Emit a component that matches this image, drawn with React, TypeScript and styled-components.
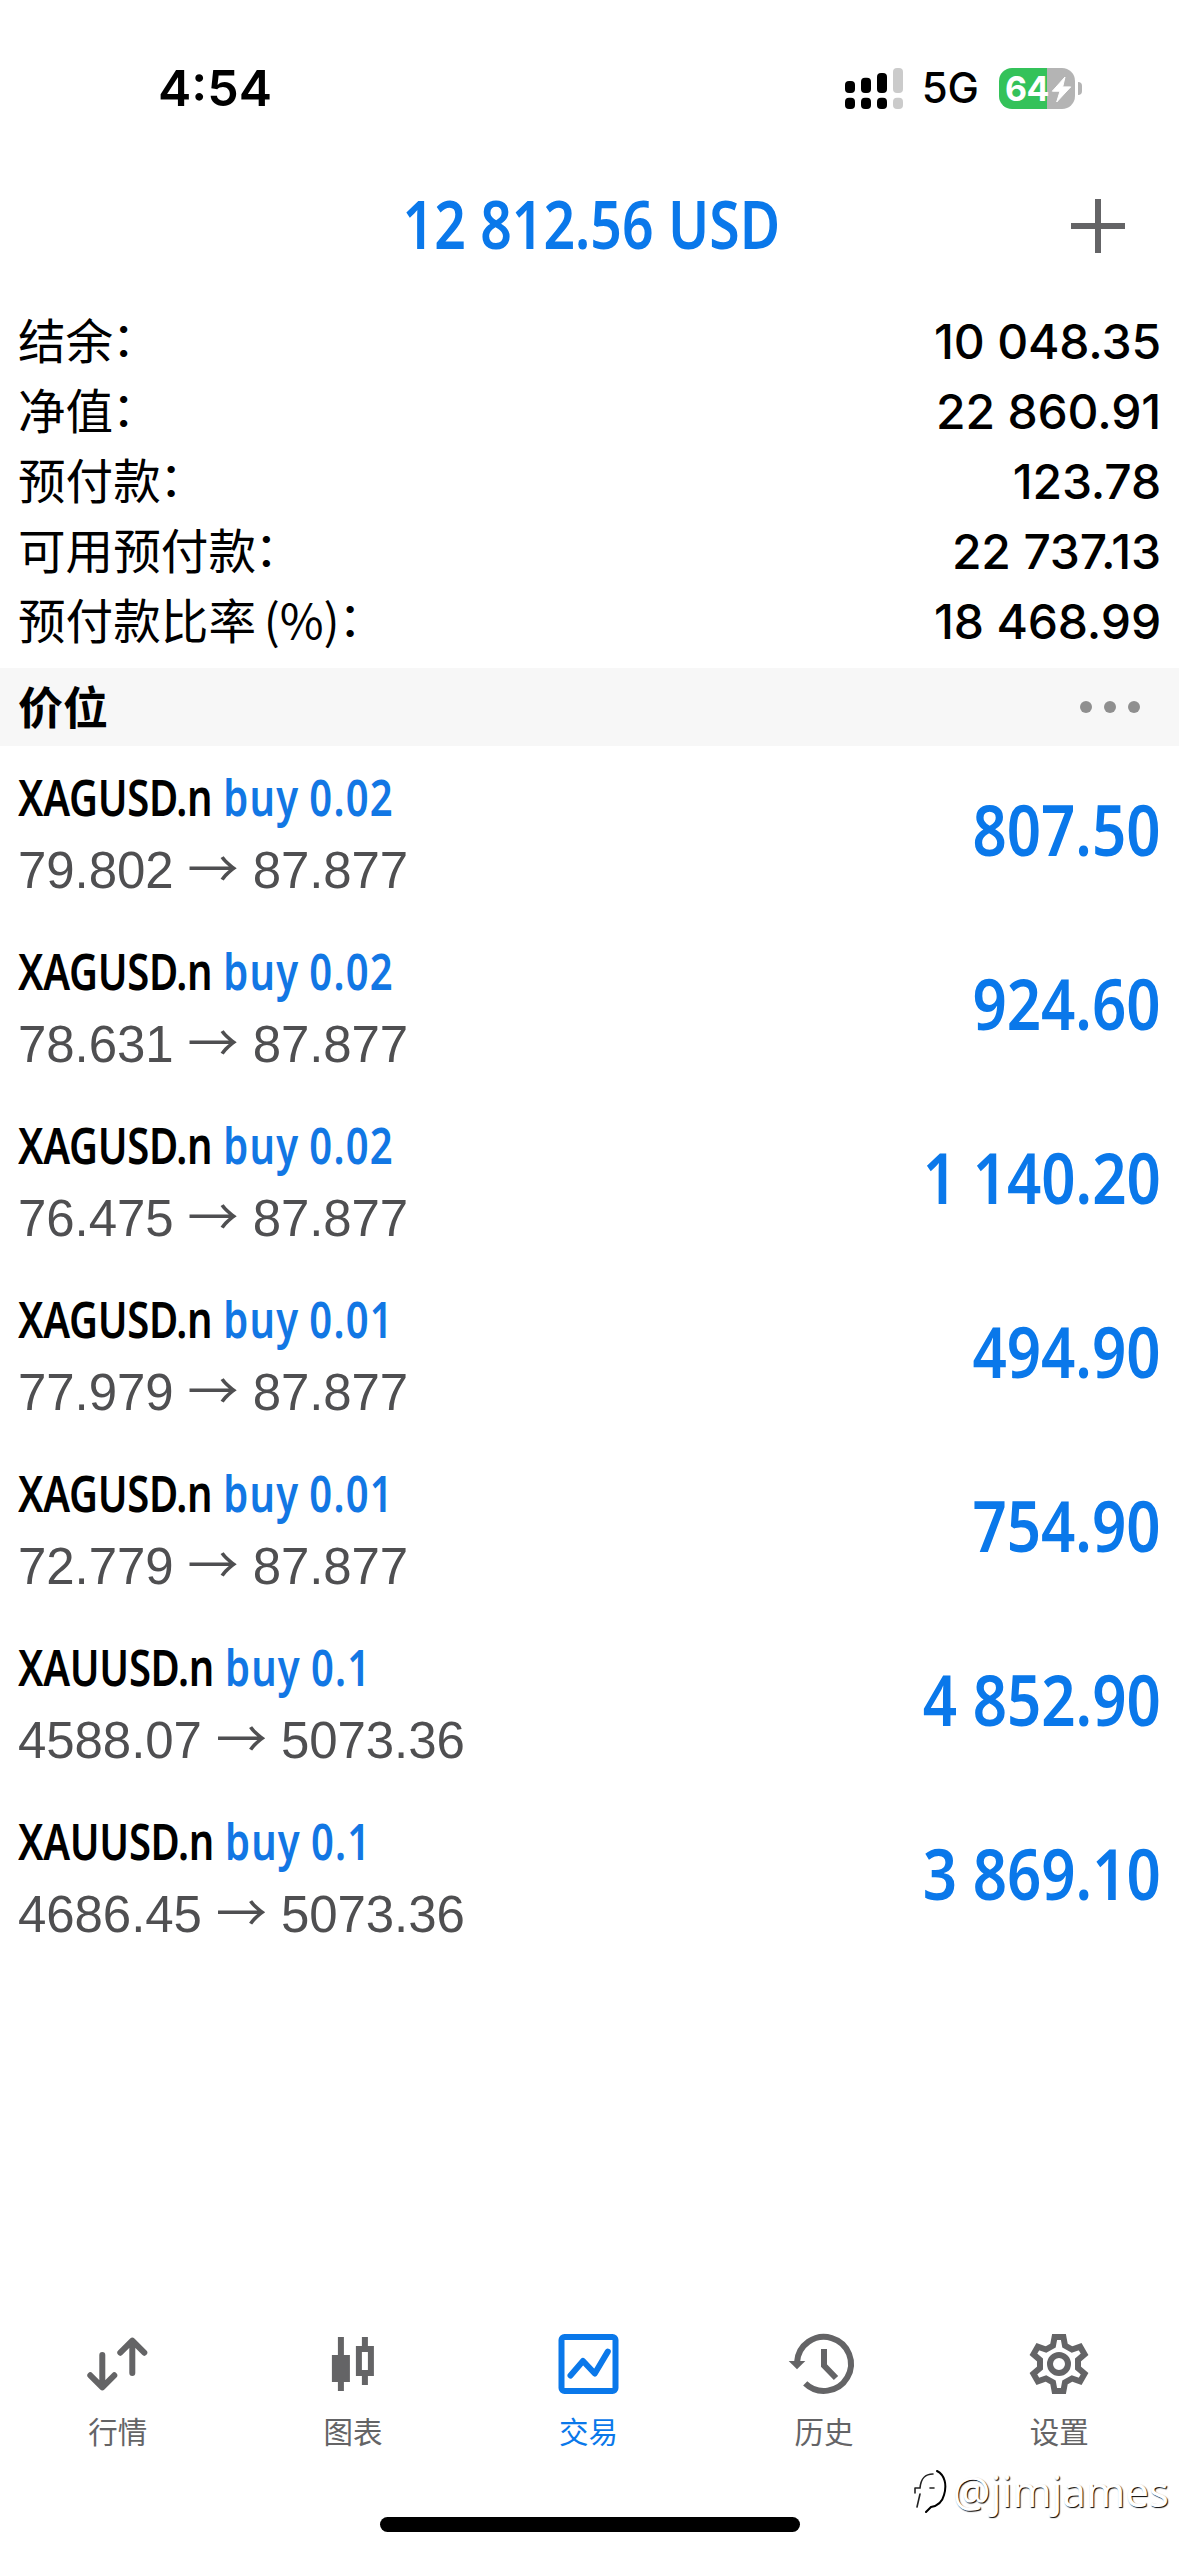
import React from "react";
import styled, { createGlobalStyle } from "styled-components";

const BLUE = "#0a78ea";
const GREY = "#646466";
const UI = `Inter, "Noto Sans CJK SC", sans-serif`;
const CJK = `"Noto Sans CJK SC", sans-serif`;

const GlobalStyle = createGlobalStyle`
  body { margin: 0; background: #fff; }
  * { box-sizing: border-box; }
`;

const Screen = styled.main`
  position: relative;
  width: 1179px;
  height: 2556px;
  overflow: hidden;
  display: flex;
  flex-direction: column;
  background: #fff;
  color: #000;
  font-family: ${UI};
`;

const StatusBar = styled.header`
  height: 176px;
  padding: 0 97px 0 158px;
  display: flex;
  align-items: center;
  justify-content: space-between;
`;

const Clock = styled.time`
  font-size: 50px;
  font-weight: 600;
  line-height: 60px;
`;

const StatusIcons = styled.div`
  display: flex;
  align-items: center;
`;

const Network = styled.span`
  margin: 0 20px 0 18px;
  font-size: 42px;
  font-weight: 500;
  line-height: 50px;
`;

const Battery = styled.div`
  position: relative;
  width: 76px;
  height: 41px;
  padding-left: 6px;
  display: flex;
  align-items: center;
  border-radius: 13px;
  background: linear-gradient(90deg, #34c25a 48px, #b4b4b4 48px);
  color: #fff;
`;

const Charge = styled.span`
  font-size: 34px;
  font-weight: 700;
  line-height: 41px;
  letter-spacing: -0.5px;
`;

const Bolt = styled.svg`
  position: absolute;
  left: 0;
  top: 0;
  width: 76px;
  height: 41px;
`;

const BatteryNub = styled.i`
  width: 4px;
  height: 13px;
  margin-left: 3px;
  border-radius: 0 6px 6px 0;
  background: #b4b4b4;
`;

const TitleBar = styled.div`
  height: 100px;
  padding: 0 51px;
  display: grid;
  grid-template-columns: 60px 1fr 60px;
  align-items: center;
`;

const Condensed = styled.span`
  font-family: "Noto Sans", "Open Sans", sans-serif;
  font-weight: 600;
  white-space: nowrap;
`;

const Total = styled(Condensed)`
  grid-column: 2;
  justify-self: center;
  padding-bottom: 7px;
  margin-left: 3px;
  font-size: 66px;
  line-height: 90px;
  transform: scaleX(0.838);
  color: ${BLUE};
`;

const AddButton = styled.button`
  width: 60px;
  height: 60px;
  padding: 0;
  border: 0;
  background: none;
  svg { display: block; }
`;

const Summary = styled.dl`
  margin: 30px 0 12px;
  padding: 0 18px;
`;

const SummaryRow = styled.div`
  height: 70px;
  display: flex;
  align-items: baseline;
  justify-content: space-between;
`;

const SummaryLabel = styled.dt`
  font-family: ${CJK};
  font-size: 47.6px;
  line-height: 65px;
  word-spacing: -3px;
`;

const Colon = styled.span`
  margin-left: -1.5px;
  line-height: 0;
  vertical-align: 3px;
`;

const SummaryValue = styled.dd`
  margin: 0;
  font-size: 48px;
  font-weight: 500;
  line-height: 70px;
  letter-spacing: -0.15px;
`;

const SectionBar = styled.div`
  height: 78px;
  padding: 0 39px 0 18px;
  display: flex;
  align-items: center;
  justify-content: space-between;
  background: #f7f7f7;
`;

const SectionTitle = styled.h2`
  margin: 0;
  padding-bottom: 3px;
  font-family: ${CJK};
  font-size: 45px;
  font-weight: 700;
  line-height: 73px;
`;

const Dots = styled.div`
  display: flex;
  gap: 12px;
  i {
    width: 12px;
    height: 12px;
    border-radius: 50%;
    background: #8f8f8f;
  }
`;

const Positions = styled.ul`
  flex: 1;
  margin: 0;
  padding: 0;
  list-style: none;
`;

const Position = styled.li`
  height: 174px;
  padding: 21px 18px 19px;
  display: flex;
  justify-content: space-between;
`;

const Deal = styled.div`
  display: grid;
  grid-template-rows: 60px 60px;
  row-gap: 14px;
  justify-items: start;
`;

const Instrument = styled(Condensed)`
  font-size: 50px;
  line-height: 60px;
  letter-spacing: -0.4px;
  word-spacing: 1.2px;
  transform: scaleX(0.8);
  transform-origin: left;
`;

const Side = styled.span`
  letter-spacing: 1.5px;
  word-spacing: -2px;
  color: #1277e4;
`;

const Prices = styled.span`
  font-family: "Liberation Sans", Arial, sans-serif;
  font-size: 51px;
  line-height: 60px;
  letter-spacing: -0.08px;
  white-space: nowrap;
  color: #4f4f51;
`;

const Arrow = styled.span`
  font-family: ${CJK};
  line-height: 1;
`;

const Profit = styled(Condensed)`
  height: 80px;
  font-size: 70px;
  line-height: 80px;
  margin-top: 22px;
  transform: scaleX(0.857);
  transform-origin: right;
  color: ${BLUE};
`;

const TabBar = styled.nav`
  padding: 0 2px 67px 0;
  display: flex;
`;

const Tab = styled.a<{ $active?: boolean }>`
  flex: 1;
  display: flex;
  flex-direction: column;
  align-items: center;
  gap: 16px;
  color: ${(p) => (p.$active ? BLUE : GREY)};
  svg { display: block; overflow: visible; }
`;

const TabLabel = styled.span`
  font-family: ${CJK};
  font-size: 29.5px;
  line-height: 40px;
`;

const HomeIndicator = styled.div`
  width: 420px;
  height: 15px;
  margin: 0 0 24px 380px;
  border-radius: 8px;
  background: #000;
`;

const Watermark = styled.div`
  position: absolute;
  right: 10px;
  top: 2462px;
  display: flex;
  align-items: center;
  gap: 5px;
  font-family: "Noto Sans", sans-serif;
  font-size: 42px;
  line-height: 58px;
  color: #fff;
  text-shadow: 1px 1px 1px #000;
`;

const summary = [
  ["结余", "10 048.35"],
  ["净值", "22 860.91"],
  ["预付款", "123.78"],
  ["可用预付款", "22 737.13"],
  ["预付款比率 (%)", "18 468.99"],
];

const positions = [
  { symbol: "XAGUSD.n", volume: "0.02", open: "79.802", now: "87.877", profit: "807.50" },
  { symbol: "XAGUSD.n", volume: "0.02", open: "78.631", now: "87.877", profit: "924.60" },
  { symbol: "XAGUSD.n", volume: "0.02", open: "76.475", now: "87.877", profit: "1 140.20" },
  { symbol: "XAGUSD.n", volume: "0.01", open: "77.979", now: "87.877", profit: "494.90" },
  { symbol: "XAGUSD.n", volume: "0.01", open: "72.779", now: "87.877", profit: "754.90" },
  { symbol: "XAUUSD.n", volume: "0.1", open: "4588.07", now: "5073.36", profit: "4 852.90" },
  { symbol: "XAUUSD.n", volume: "0.1", open: "4686.45", now: "5073.36", profit: "3 869.10" },
];

const SignalIcon = () => (
  <svg width="59" height="41" viewBox="0 0 59 41">
    {[13, 9.7, 5, 0].map((y, i) => (
      <g key={y} fill={i === 3 ? "#cbcbcb" : "#000"}>
        <rect x={i * 16} y={y} width="10" height={25 - y} rx="4" />
        <rect x={i * 16} y="29.7" width="10" height="11.3" rx="4" />
      </g>
    ))}
  </svg>
);

const QuotesIcon = () => (
  <svg width="60" height="60" fill="none" stroke="currentColor" strokeWidth="6" strokeLinecap="round" strokeLinejoin="round">
    <path d="M14.3 21V53M2.3 41.3L14.3 53.3L26.3 41.3M44.3 39V7M32.3 18.7L44.3 6.7L56.3 18.7" />
  </svg>
);

const ChartIcon = () => (
  <svg width="60" height="60" fill="currentColor">
    <path d="M14.9 3h6v18h6v27h-6v9h-6v-9h-6V21h6z" />
    <path fillRule="evenodd" d="M38.9 3h6v9h6v30h-6v9h-6v-9h-6V12h6zM38.9 18v18h6V18z" />
  </svg>
);

const TradeIcon = () => (
  <svg width="60" height="60" fill="none" stroke="currentColor" strokeWidth="6">
    <rect x="2.5" y="3" width="54" height="54" rx="3" />
    <path strokeLinecap="round" strokeLinejoin="round" d="M11.5 41.5L24 27L35.8 39.5L48.8 17.6" />
  </svg>
);

const HistoryIcon = () => (
  <svg width="60" height="60" fill="none" stroke="currentColor" strokeWidth="6">
    <path d="M3 28.5A27 27 0 1 1 11.2 49.3" />
    <path d="M30 15V31.5L42 44" />
    <path d="M-5.3 27H11.3L3 35.3z" fill="currentColor" stroke="none" />
  </svg>
);

const toothPoints: [number, number][] = [[-6, -18.5], [-4.4, -27], [4.4, -27], [6, -18.5]];
const gearPath = Array.from({ length: 6 }, (_, k) => {
  const a = (k * Math.PI) / 3;
  return toothPoints
    .map(([x, y]) => `${(30 + x * Math.cos(a) - y * Math.sin(a)).toFixed(2)} ${(30 + x * Math.sin(a) + y * Math.cos(a)).toFixed(2)}`)
    .join("L");
}).join("L");

const SettingsIcon = () => (
  <svg width="60" height="60" fill="none" stroke="currentColor" strokeWidth="6">
    <path d={`M${gearPath}Z`} />
    <circle cx="30" cy="30" r="9" />
  </svg>
);

const tabs = [
  { label: "行情", Icon: QuotesIcon },
  { label: "图表", Icon: ChartIcon },
  { label: "交易", Icon: TradeIcon, active: true },
  { label: "历史", Icon: HistoryIcon },
  { label: "设置", Icon: SettingsIcon },
];

export default function App() {
  return (
    <Screen>
      <GlobalStyle />
      <StatusBar>
        <Clock>4:54</Clock>
        <StatusIcons>
          <SignalIcon />
          <Network>5G</Network>
          <Battery>
            <Charge>64</Charge>
            <Bolt viewBox="0 0 76 41">
              <path d="M66 9L53.3 23.2H61L57.7 34L71.7 18.9H63.7z" fill="#fff" stroke="#fff" strokeLinejoin="round" />
            </Bolt>
          </Battery>
          <BatteryNub />
        </StatusIcons>
      </StatusBar>

      <TitleBar>
        <Total>12 812.56 USD</Total>
        <AddButton aria-label="add">
          <svg width="60" height="60" stroke={GREY} strokeWidth="6">
            <path d="M3 30H57M30 3V57" />
          </svg>
        </AddButton>
      </TitleBar>

      <Summary>
        {summary.map(([label, value]) => (
          <SummaryRow key={label}>
            <SummaryLabel>{label}<Colon>：</Colon></SummaryLabel>
            <SummaryValue>{value}</SummaryValue>
          </SummaryRow>
        ))}
      </Summary>

      <SectionBar>
        <SectionTitle>价位</SectionTitle>
        <Dots><i /><i /><i /></Dots>
      </SectionBar>

      <Positions>
        {positions.map((p) => (
          <Position key={p.open}>
            <Deal>
              <Instrument>{p.symbol} <Side>buy {p.volume}</Side></Instrument>
              <Prices>{p.open} <Arrow>→</Arrow> {p.now}</Prices>
            </Deal>
            <Profit>{p.profit}</Profit>
          </Position>
        ))}
      </Positions>

      <TabBar>
        {tabs.map(({ label, Icon, active }) => (
          <Tab key={label} $active={active}>
            <Icon />
            <TabLabel>{label}</TabLabel>
          </Tab>
        ))}
      </TabBar>
      <HomeIndicator />

      <Watermark>
        <svg width="36" height="44" viewBox="0 0 36 44" fill="none" strokeLinecap="round">
          <path d="M3 19H8C9 9 13 5 21 5M3 19V24M8 25L5 38M18 19H22" stroke="#222" strokeWidth="1.6" />
          <path d="M25 2C33 6 35 16 32 26C30 34 25 37 19 38L14 43" stroke="#000" strokeWidth="2" />
        </svg>
        <span>@jimjames</span>
      </Watermark>
    </Screen>
  );
}
